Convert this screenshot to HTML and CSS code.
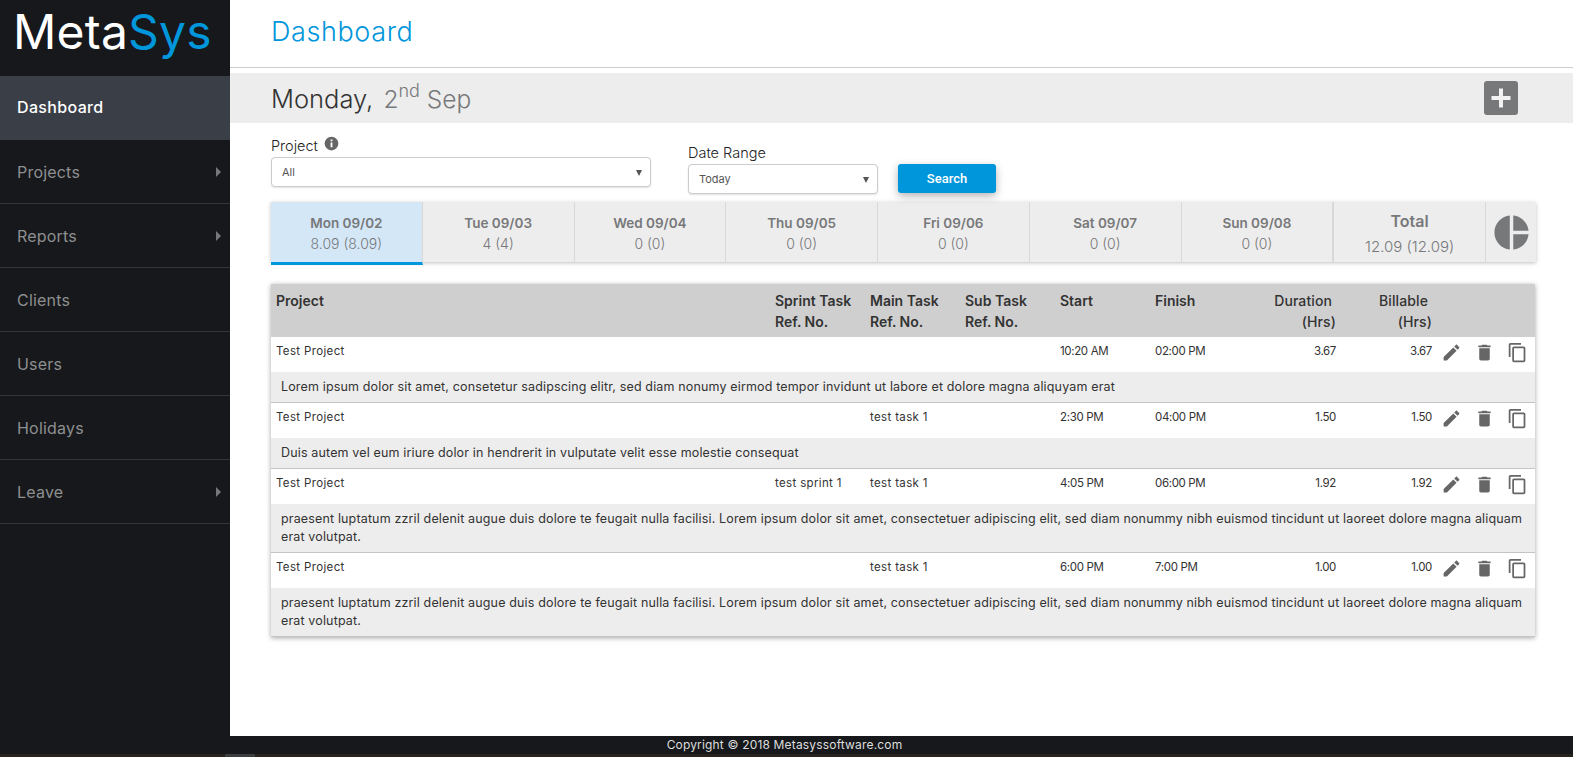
FILE: index.html
```html
<!DOCTYPE html>
<html lang="en">
<head>
    <meta charset="UTF-8">
    <title>MetaSys - Dashboard</title>
    <link rel="stylesheet" href="styles.css">
</head>
<body>
    <svg class="sprite" width="0" height="0">
        <symbol id="i-edit" viewBox="0 0 24 24"><path d="M3 17.25V21h3.75L17.81 9.94l-3.75-3.75L3 17.25zM20.71 7.04c.39-.39.39-1.02 0-1.41l-2.34-2.34c-.39-.39-1.02-.39-1.41 0l-1.83 1.83 3.75 3.75 1.83-1.83z"/></symbol>
        <symbol id="i-delete" viewBox="0 0 24 24"><path d="M6 19c0 1.1.9 2 2 2h8c1.1 0 2-.9 2-2V7H6v12zM19 4h-3.5l-1-1h-5l-1 1H5v2h14V4z"/></symbol>
        <symbol id="i-copy" viewBox="0 0 24 24"><path d="M16 1H4c-1.1 0-2 .9-2 2v14h2V3h12V1zm3 4H8c-1.1 0-2 .9-2 2v14c0 1.1.9 2 2 2h11c1.1 0 2-.9 2-2V7c0-1.1-.9-2-2-2zm0 16H8V7h11v14z"/></symbol>
    </svg>

    <div class="layout">
        <aside class="sidebar">
            <div class="logo">Meta<span>Sys</span></div>
            <nav>
                <a class="nav-item active">Dashboard</a>
                <a class="nav-item has-sub">Projects</a>
                <a class="nav-item has-sub">Reports</a>
                <a class="nav-item">Clients</a>
                <a class="nav-item">Users</a>
                <a class="nav-item">Holidays</a>
                <a class="nav-item has-sub">Leave</a>
            </nav>
        </aside>

        <main class="content">
            <header class="page-header">
                <h1>Dashboard</h1>
            </header>

            <div class="date-bar">
                <div class="date-text">Monday, <span class="date-light">2<sup>nd</sup> Sep</span></div>
                <button class="add-btn" type="button">
                    <svg viewBox="0 0 28 28" width="28" height="28"><path d="M12 4.500h4V12h7.500v4H16v7.500h-4V16H4.500v-4H12z"/></svg>
                </button>
            </div>

            <div class="page-body">
                <form class="filters" onsubmit="return false;">
                    <div class="field field-project">
                        <label>Project
                            <svg class="info" viewBox="0 0 24 24" width="15" height="15"><path d="M12 1a11 11 0 1 0 0 22 11 11 0 0 0 0-22zm1.500 17h-3v-7.500h3zm0-9.500h-3v-3h3z"/></svg>
                        </label>
                        <div class="select-box">All</div>
                    </div>
                    <div class="field field-range">
                        <label>Date Range</label>
                        <div class="select-box">Today</div>
                    </div>
                    <button class="search-btn" type="submit">Search</button>
                </form>

                <div class="week">
                    <div class="day active"><b>Mon 09/02</b><span>8.09 (8.09)</span></div>
                    <div class="day"><b>Tue 09/03</b><span>4 (4)</span></div>
                    <div class="day"><b>Wed 09/04</b><span>0 (0)</span></div>
                    <div class="day"><b>Thu 09/05</b><span>0 (0)</span></div>
                    <div class="day"><b>Fri 09/06</b><span>0 (0)</span></div>
                    <div class="day"><b>Sat 09/07</b><span>0 (0)</span></div>
                    <div class="day"><b>Sun 09/08</b><span>0 (0)</span></div>
                    <div class="day total"><b>Total</b><span>12.09 (12.09)</span></div>
                    <div class="day chart">
                        <svg viewBox="0 0 24 24" width="41" height="41"><path d="M11 2v20c-5.070-.5-9-4.790-9-10s3.930-9.500 9-10zm2.030 0v8.990H22c-.47-4.740-4.240-8.520-8.970-8.990zm0 11.010V22c4.740-.47 8.500-4.250 8.970-8.990h-8.970z"/></svg>
                    </div>
                </div>

                <table class="entries">
                    <colgroup>
                        <col class="c-project"><col class="c-ref"><col class="c-ref"><col class="c-ref"><col class="c-ref"><col class="c-ref"><col class="c-num"><col class="c-num"><col class="c-actions">
                    </colgroup>
                    <thead>
                        <tr>
                            <th>Project</th>
                            <th>Sprint Task<br>Ref. No.</th>
                            <th>Main Task<br>Ref. No.</th>
                            <th>Sub Task<br>Ref. No.</th>
                            <th>Start</th>
                            <th>Finish</th>
                            <th class="num"><span class="hdr-top">Duration</span><br>(Hrs)</th>
                            <th class="num"><span class="hdr-top">Billable</span><br>(Hrs)</th>
                            <th></th>
                        </tr>
                    </thead>
                    <tbody>
                        <tr>
                            <td class="name">Test Project</td><td></td><td></td><td></td><td class="time">10:20 AM</td><td class="time">02:00 PM</td><td class="num">3.67</td><td class="num">3.67</td>
                            <td class="actions"><svg><use href="#i-edit"/></svg><svg><use href="#i-delete"/></svg><svg><use href="#i-copy"/></svg></td>
                        </tr>
                        <tr class="desc"><td colspan="9">Lorem ipsum dolor sit amet, consetetur sadipscing elitr, sed diam nonumy eirmod tempor invidunt ut labore et dolore magna aliquyam erat</td></tr>
                        <tr>
                            <td class="name">Test Project</td><td></td><td class="name">test task 1</td><td></td><td class="time">2:30 PM</td><td class="time">04:00 PM</td><td class="num">1.50</td><td class="num">1.50</td>
                            <td class="actions"><svg><use href="#i-edit"/></svg><svg><use href="#i-delete"/></svg><svg><use href="#i-copy"/></svg></td>
                        </tr>
                        <tr class="desc"><td colspan="9">Duis autem vel eum iriure dolor in hendrerit in vulputate velit esse molestie consequat</td></tr>
                        <tr>
                            <td class="name">Test Project</td><td class="name">test sprint 1</td><td class="name">test task 1</td><td></td><td class="time">4:05 PM</td><td class="time">06:00 PM</td><td class="num">1.92</td><td class="num">1.92</td>
                            <td class="actions"><svg><use href="#i-edit"/></svg><svg><use href="#i-delete"/></svg><svg><use href="#i-copy"/></svg></td>
                        </tr>
                        <tr class="desc"><td colspan="9">praesent luptatum zzril delenit augue duis dolore te feugait nulla facilisi. Lorem ipsum dolor sit amet, consectetuer adipiscing elit, sed diam nonummy nibh euismod tincidunt ut laoreet dolore magna aliquam erat volutpat.</td></tr>
                        <tr>
                            <td class="name">Test Project</td><td></td><td class="name">test task 1</td><td></td><td class="time">6:00 PM</td><td class="time">7:00 PM</td><td class="num">1.00</td><td class="num">1.00</td>
                            <td class="actions"><svg><use href="#i-edit"/></svg><svg><use href="#i-delete"/></svg><svg><use href="#i-copy"/></svg></td>
                        </tr>
                        <tr class="desc"><td colspan="9">praesent luptatum zzril delenit augue duis dolore te feugait nulla facilisi. Lorem ipsum dolor sit amet, consectetuer adipiscing elit, sed diam nonummy nibh euismod tincidunt ut laoreet dolore magna aliquam erat volutpat.</td></tr>
                    </tbody>
                </table>
            </div>
        </main>
    </div>

    <footer class="footer">Copyright © 2018 Metasyssoftware.com</footer>
    <div class="bottom-strip"><span></span></div>
</body>
</html>
```

FILE: styles.css
```css
* {
    box-sizing: border-box;
}

body {
    margin: 0;
    height: 757px;
    overflow: hidden;
    display: flex;
    flex-direction: column;
    background-color: #fff;
    color: #333;
    font-family: Inter, "Open Sans", sans-serif;
    font-size: 12px;
}

.sprite {
    display: block;
    height: 0;
}

.layout {
    display: flex;
    height: 736px;
}

/* Sidebar */
.sidebar {
    width: 230px;
    flex: none;
    background-color: #16181b;
}

.logo {
    height: 76px;
    padding-left: 13px;
    color: #fff;
    font-size: 48px;
    font-weight: 400;
    line-height: 64px;
    letter-spacing: 0.2px;
}

.logo span {
    color: #0096db;
}

.nav-item {
    display: flex;
    align-items: center;
    position: relative;
    height: 64px;
    padding-left: 17px;
    color: #8e8f90;
    font-size: 16px;
    letter-spacing: 0.2px;
    border-bottom: 1px solid #33353a;
}

.nav-item.active {
    padding-bottom: 2px;
    color: #fff;
    font-weight: 500;
    letter-spacing: 0.35px;
    background-color: #3a3e47;
    border-bottom: none;
}

.nav-item.has-sub::after {
    content: "";
    position: absolute;
    right: 9px;
    top: 27px;
    border-left: 5px solid #77787a;
    border-top: 5px solid transparent;
    border-bottom: 5px solid transparent;
}

/* Main area */
.content {
    flex: 1;
    min-width: 0;
}

.page-header {
    height: 68px;
    padding-left: 41px;
    border-bottom: 1px solid #ccc;
}

.page-header h1 {
    margin: 0;
    color: #0096db;
    font-size: 27px;
    font-weight: 300;
    line-height: 64px;
    letter-spacing: 0.6px;
}

.date-bar {
    display: flex;
    align-items: center;
    justify-content: space-between;
    height: 50px;
    margin-top: 5px;
    padding: 0 55px 0 41px;
    background-color: #ededed;
}

.date-text {
    color: #333;
    font-size: 25.500px;
    font-weight: 300;
}

.date-light {
    margin-left: 3px;
    color: #77787a;
    font-size: 24.500px;
}

.date-light sup {
    font-size: 18px;
    line-height: 0;
    vertical-align: 11px;
}

.add-btn {
    display: flex;
    align-items: center;
    justify-content: center;
    width: 34px;
    height: 34px;
    padding: 0;
    border: none;
    border-radius: 3px;
    background-color: #77787a;
}

.add-btn svg {
    fill: #f2f2f2;
}

.page-body {
    padding: 0 37px 0 41px;
}

/* Filters */
.filters {
    display: flex;
    align-items: flex-end;
    height: 71px;
}

.field label {
    display: flex;
    align-items: center;
    gap: 6px;
    height: 22px;
    padding-bottom: 1px;
    color: #222;
    font-size: 14.500px;
    font-weight: 300;
}

.info {
    fill: #666;
    margin-top: -5px;
}

.field-project {
    width: 380px;
    margin-right: 37px;
    margin-bottom: 7px;
}

.field-range {
    width: 190px;
    margin-right: 20px;
}

.select-box {
    position: relative;
    height: 30px;
    padding-left: 10px;
    line-height: 28px;
    color: #555;
    font-size: 11px;
    background-color: #fff;
    border: 1px solid #ccc;
    border-radius: 4px;
    box-shadow: 0 1px 2px rgba(0, 0, 0, 0.12);
}

.select-box::after {
    content: "";
    position: absolute;
    right: 8px;
    top: 12px;
    border-top: 6px solid #555;
    border-left: 3px solid transparent;
    border-right: 3px solid transparent;
}

.search-btn {
    width: 98px;
    height: 29px;
    margin-bottom: 1px;
    color: #fff;
    font-family: Roboto, sans-serif;
    font-size: 13px;
    font-weight: 500;
    background-color: #0096db;
    border: none;
    border-radius: 3px;
    box-shadow: 0 3px 8px rgba(0, 0, 0, 0.3);
}

/* Week strip */
.week {
    display: flex;
    height: 60px;
    margin-top: 8px;
    background-color: #ededed;
    box-shadow: 0 1px 4px rgba(0, 0, 0, 0.25);
}

.day {
    flex: 1;
    height: 60px;
    padding-top: 3px;
    display: flex;
    flex-direction: column;
    align-items: center;
    justify-content: center;
    color: #77787a;
    border-right: 1px solid #d8d8d8;
}

.day b {
    font-size: 13.500px;
    font-weight: 600;
}

.day span {
    margin-top: 4px;
    font-size: 14px;
    font-weight: 300;
}

.day.active {
    height: 63px;
    background-color: #d4e7f7;
    border-bottom: 3px solid #0096db;
}

.day.total {
    border-left: 1px solid #d8d8d8;
}

.day.total b {
    font-size: 16px;
}

.day.total span {
    margin-top: 6px;
    font-size: 15px;
}

.day.chart {
    flex: 0 0 50px;
    padding-top: 0;
    border-right: none;
}

.day.chart svg {
    fill: #77787a;
}

/* Table */
.entries {
    width: 1264px;
    margin-top: 22px;
    table-layout: fixed;
    border-collapse: separate;
    border-spacing: 0;
    box-shadow: 0 1px 5px rgba(0, 0, 0, 0.35);
}

.c-project {
    width: 499px;
}

.c-ref {
    width: 95px;
}

.c-num {
    width: 96px;
}

.entries th {
    height: 53px;
    padding: 6px 5px 0;
    color: #333;
    font-size: 14px;
    font-weight: 600;
    line-height: 21px;
    text-align: left;
    vertical-align: top;
    background-color: #cfcfcf;
}

.entries th.num {
    font-weight: 500;
    letter-spacing: 0.1px;
}

.entries .num {
    text-align: right;
}

.hdr-top {
    display: inline-block;
    margin-right: 4px;
}

.entries td {
    height: 35px;
    padding: 0 5px 7px;
    color: #333;
    font-size: 11.500px;
    font-weight: 400;
}

.entries td.name {
    letter-spacing: 0.35px;
}

.entries td.time,
.entries td.num {
    letter-spacing: -0.35px;
}

.entries tr.desc td {
    height: 31px;
    padding: 6px 10px;
    font-size: 12.500px;
    line-height: 18px;
    letter-spacing: 0.15px;
    background-color: #ededed;
    border-bottom: 1px solid #c4c4c4;
}

.entries td.actions {
    padding: 0 0 4px 4px;
    white-space: nowrap;
}

.actions svg {
    width: 21px;
    height: 21px;
    margin-right: 12px;
    vertical-align: middle;
    fill: #666;
}

/* Footer */
.footer {
    height: 18px;
    padding-right: 4px;
    color: #ddd;
    font-size: 12px;
    line-height: 18px;
    letter-spacing: 0.17px;
    text-align: center;
    background-color: #16181b;
}

.bottom-strip {
    flex: 1;
    padding-left: 225px;
    background-color: #26241d;
}

.bottom-strip span {
    display: block;
    width: 30px;
    height: 3px;
    background-color: #3c3d3d;
}
```
